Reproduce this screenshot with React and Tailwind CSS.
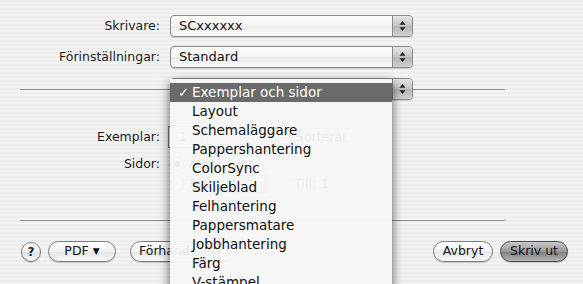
import React from "react";

const font = { fontFamily: '"DejaVu Sans", "Liberation Sans", sans-serif' };

function Stepper() {
  return (
    <div className="flex w-[20px] flex-col items-center justify-center self-stretch rounded-r-[4px] border-l border-[#8a8a8a] bg-[linear-gradient(#e6e6e6,#c4c4c4_50%,#b4b4b4_51%,#d0d0d0)]">
      <svg width="7" height="12" viewBox="0 0 7 12">
        <path d="M3.5 1 L6.5 4.8 L0.5 4.8 Z" fill="#222" />
        <path d="M3.5 11 L6.5 7.2 L0.5 7.2 Z" fill="#222" />
      </svg>
    </div>
  );
}

function Popup({ text }) {
  return (
    <div className="flex h-[22px] w-[243px] items-stretch rounded-[4px] border border-[#8a8a8a] bg-[linear-gradient(#fdfdfd,#f4f4f4_50%,#ececec_51%,#fafafa)] shadow-[0_1px_1px_rgba(0,0,0,0.15)]">
      <div className="flex flex-1 items-center pl-[8px] text-[13px] text-[#111]">{text}</div>
      <Stepper />
    </div>
  );
}

function Pill({ children, className = "" }) {
  return (
    <div
      className={
        "flex h-[21px] items-center justify-center rounded-full border text-[12.5px] text-[#111] shadow-[0_1px_1px_rgba(0,0,0,0.2)] " +
        className
      }
    >
      {children}
    </div>
  );
}

const light = "border-[#7d7d7d] bg-[linear-gradient(#ffffff,#f2f2f2_50%,#e4e4e4_51%,#fbfbfb)]";

const items = [
  "Layout",
  "Schemaläggare",
  "Pappershantering",
  "ColorSync",
  "Skiljeblad",
  "Felhantering",
  "Pappersmatare",
  "Jobbhantering",
  "Färg",
  "V-stämpel",
];

export default function App() {
  return (
    <div
      style={font}
      className="relative h-[284px] w-[583px] overflow-hidden bg-[repeating-linear-gradient(180deg,#ededed_0px,#ededed_2px,#f4f4f4_2px,#f4f4f4_4px)] text-[#1a1a1a]"
    >
      <div className="flex flex-col pt-[15px]">
        <div className="flex h-[22px] items-center">
          <div className="w-[161px] pr-[1px] text-right text-[12.5px]">Skrivare:</div>
          <div className="ml-[9px]">
            <Popup text="SCxxxxxx" />
          </div>
        </div>
        <div className="mt-[9px] flex h-[22px] items-center">
          <div className="w-[161px] pr-[1px] text-right text-[12.5px]">Förinställningar:</div>
          <div className="ml-[9px]">
            <Popup text="Standard" />
          </div>
        </div>
        <div className="mt-[10px] flex h-[22px] items-center">
          <div className="ml-[20px] h-px w-[150px] bg-[#8c8c8c]" />
          <Popup text="" />
          <div className="h-px w-[92px] bg-[#8c8c8c]" />
        </div>

        <div className="mt-[26px] flex h-[22px] items-center">
          <div className="w-[161px] pr-[1px] text-right text-[12.5px]">Exemplar:</div>
          <div className="ml-[7px] flex h-[22px] w-[40px] items-center border border-[#777] bg-white pl-[10px] text-[12.5px]">1</div>
          <div className="ml-[70px] flex items-center gap-[5px] text-[12.5px]">
            <div className="h-[13px] w-[13px] rounded-[2px] border border-[#777] bg-white" />
            <span>Sorterar</span>
          </div>
        </div>
        <div className="mt-[6px] flex h-[20px] items-center">
          <div className="w-[161px] pr-[1px] text-right text-[12.5px]">Sidor:</div>
          <div className="ml-[9px] flex items-center gap-[5px] text-[12.5px]">
            <div className="flex h-[14px] w-[14px] items-center justify-center rounded-full border border-[#777] bg-white">
              <div className="h-[6px] w-[6px] rounded-full bg-[#333]" />
            </div>
            <span>Alla</span>
          </div>
        </div>
        <div className="flex h-[20px] items-center">
          <div className="ml-[170px] flex items-center gap-[5px] text-[12.5px]">
            <div className="h-[14px] w-[14px] rounded-full border border-[#777] bg-white" />
            <span>Från:</span>
            <div className="ml-[2px] h-[18px] w-[40px] border border-[#999] bg-white" />
            <span className="ml-[22px]">Till:</span>
            <span>1</span>
          </div>
        </div>

        <div className="ml-[20px] mt-[26px] h-px w-[485px] bg-[#8c8c8c]" />

        <div className="mt-[20px] flex h-[21px] items-center pr-[15px]">
          <div className="ml-[21px] flex h-[20px] w-[20px] items-center justify-center rounded-full border border-[#7d7d7d] bg-[linear-gradient(#ffffff,#f0f0f0_50%,#e2e2e2_51%,#fbfbfb)] text-[12px] font-bold text-[#222] shadow-[0_1px_1px_rgba(0,0,0,0.2)]">
            ?
          </div>
          <Pill className={"ml-[7px] w-[68px] gap-[4px] " + light}>
            <span>PDF</span>
            <span className="text-[9px]">▼</span>
          </Pill>
          <Pill className={"ml-[14px] w-[104px] justify-start pl-[8px] " + light}>Förhandsvisa</Pill>
          <Pill className={"ml-auto w-[60px] " + light}>Avbryt</Pill>
          <Pill className="ml-[7px] w-[68px] border-[#4a4a4a] bg-[linear-gradient(#c8c8c8,#9a9a9a_50%,#7e7e7e_51%,#b4b4b4)]">
            Skriv ut
          </Pill>
        </div>
      </div>

      {/* open menu */}
      <div className="absolute left-[170px] top-[79px] w-[222px] bg-[rgba(246,246,246,0.95)] pb-[10px] pt-[4px] shadow-[0_4px_10px_rgba(0,0,0,0.65)]">
        <div className="relative flex h-[19px] items-center bg-[#6a6a6a] pl-[22px] text-[13.5px] text-white">
          <span className="absolute left-[8px] text-[13px] font-bold">✓</span>
          Exemplar och sidor
        </div>
        {items.map((t) => (
          <div key={t} className="flex h-[19px] items-center pl-[22px] text-[13.5px] text-[#111]">
            {t}
          </div>
        ))}
      </div>
    </div>
  );
}
